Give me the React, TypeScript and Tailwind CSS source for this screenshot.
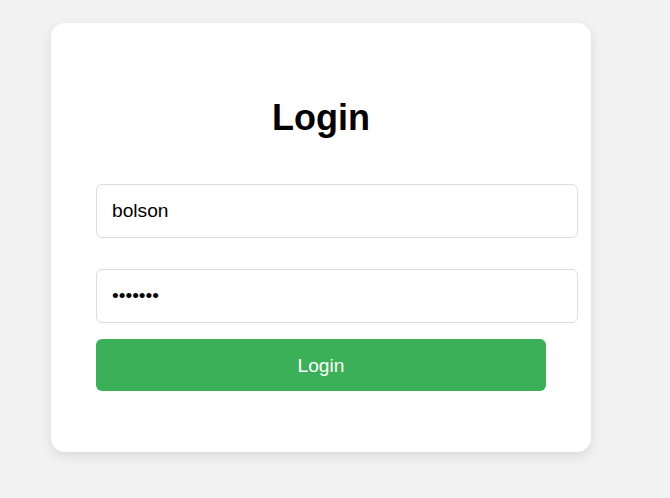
import React from "react";

export default function App() {
  return (
    <div className="min-h-[498px] w-full bg-[#f2f2f2] pt-[23px] pl-[51px]" style={{ fontFamily: '"Liberation Sans", Arial, sans-serif' }}>
      <div className="box-border w-[540px] rounded-[14px] bg-white px-[45px] pt-[45px] pb-[61px] shadow-[0_4px_12px_rgba(0,0,0,0.1)]">
        <h1 className="mt-[30px] mb-[46px] text-center text-[36px] font-bold leading-[40px] text-black">Login</h1>
        <input
          type="text"
          defaultValue="bolson"
          className="box-content block h-[22px] w-[450px] rounded-[6px] border border-[#dddddd] bg-white px-[15px] py-[15px] text-[19.2px] leading-[22px] text-black outline-none"
        />
        <input
          type="password"
          defaultValue="1234567"
          className="mt-[31px] box-content block h-[22px] w-[450px] rounded-[6px] border border-[#dddddd] bg-white px-[15px] py-[15px] text-[19.2px] leading-[22px] text-black outline-none"
        />
        <button className="mt-[16px] block h-[52px] w-[450px] rounded-[6px] bg-[#3bb058] pt-[1px] text-[19.2px] leading-[22px] text-white">
          Login
        </button>
      </div>
    </div>
  );
}
